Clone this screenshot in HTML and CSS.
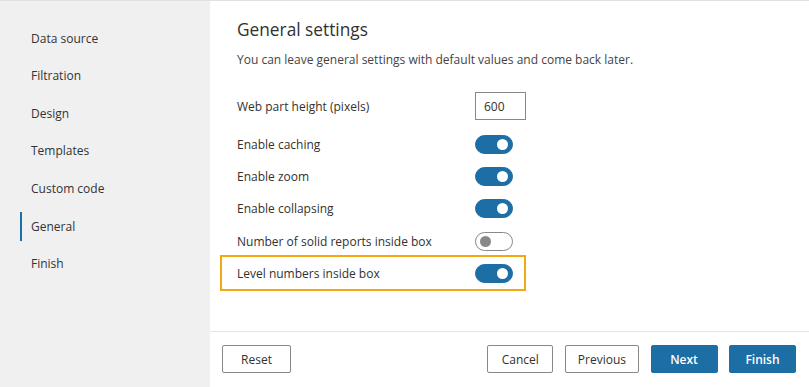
FILE: index.html
```html
<!DOCTYPE html>
<html lang="en">
<head>
    <meta charset="UTF-8">
    <meta name="viewport" content="width=device-width, initial-scale=1.0">
    <title>Wizard - General settings</title>
    <link rel="stylesheet" href="styles.css">
</head>
<body>
    <div class="wizard">
        <!-- Steps -->
        <nav class="steps">
            <div class="step">Data source</div>
            <div class="step">Filtration</div>
            <div class="step">Design</div>
            <div class="step">Templates</div>
            <div class="step">Custom code</div>
            <div class="step active">General</div>
            <div class="step">Finish</div>
        </nav>

        <!-- Page -->
        <div class="page">
            <div class="content">
                <h2>General settings</h2>
                <p class="desc">You can leave general settings with default values and come back later.</p>

                <div class="form">
                    <div class="row first">
                        <label for="height">Web part height (pixels)</label>
                        <input type="text" id="height" value="600">
                    </div>
                    <div class="row">
                        <label>Enable caching</label>
                        <span class="toggle on"><span class="knob"></span></span>
                    </div>
                    <div class="row">
                        <label>Enable zoom</label>
                        <span class="toggle on"><span class="knob"></span></span>
                    </div>
                    <div class="row">
                        <label>Enable collapsing</label>
                        <span class="toggle on"><span class="knob"></span></span>
                    </div>
                    <div class="row">
                        <label>Number of solid reports inside box</label>
                        <span class="toggle"><span class="knob"></span></span>
                    </div>
                    <div class="row highlight">
                        <label>Level numbers inside box</label>
                        <span class="toggle on"><span class="knob"></span></span>
                    </div>
                </div>
            </div>

            <!-- Footer -->
            <div class="footer">
                <button class="btn reset">Reset</button>
                <div class="spacer"></div>
                <button class="btn">Cancel</button>
                <button class="btn">Previous</button>
                <button class="btn primary">Next</button>
                <button class="btn primary">Finish</button>
            </div>
        </div>
    </div>
</body>
</html>
```

FILE: styles.css
```css
/* Global */
body {
    margin: 0;
    font-family: "Open Sans", "Noto Sans", sans-serif;
    font-size: 12px;
    color: #323130;
    background-color: #fff;
}
.wizard {
    display: flex;
    height: 387px;
    box-sizing: border-box;
    border-top: 1px solid #e1e1e1;
}

/* Steps */
.steps {
    width: 210px;
    flex-shrink: 0;
    background-color: #f0f0f0;
    padding: 22.5px 0 0 20px;
    box-sizing: border-box;
    display: flex;
    flex-direction: column;
    gap: 8.67px;
}
.step {
    height: 29px;
    line-height: 29px;
    padding-left: 11px;
    color: #333;
    cursor: pointer;
}
.step.active {
    border-left: 2px solid #1c6ea4;
    padding-left: 9px;
}

/* Page */
.page {
    flex: 1;
    display: flex;
    flex-direction: column;
}
.content {
    flex: 1;
    padding: 16px 0 0 27px;
}
h2 {
    margin: 0;
    font-size: 17.3px;
    line-height: 26px;
    font-weight: 400;
    color: #323130;
}
.desc {
    margin: 8px 0 0;
    line-height: 18px;
    color: #444;
}
.form {
    margin-top: 21px;
}
.row {
    display: flex;
    align-items: center;
    height: 32.25px;
}
.row.first {
    height: 32px;
    margin-bottom: 6.25px;
}
.row label {
    width: 238px;
    flex-shrink: 0;
}
.row.highlight {
    box-sizing: border-box;
    height: 36px;
    width: 306px;
    margin: -2px 0 -2px -17px;
    padding-left: 15px;
    border: 2px solid #f4a80f;
}
input {
    width: 51px;
    height: 28px;
    box-sizing: border-box;
    border: 1px solid #8a8886;
    padding: 0 8px;
    font: inherit;
    color: #323130;
}

/* Toggle */
.toggle {
    width: 38px;
    height: 19px;
    box-sizing: border-box;
    border-radius: 10px;
    border: 1px solid #8a8886;
    display: flex;
    align-items: center;
    padding: 0 4px;
}
.toggle .knob {
    width: 11px;
    height: 11px;
    border-radius: 50%;
    background-color: #8a8886;
}
.toggle.on {
    background-color: #1c6ea4;
    border-color: #1c6ea4;
    justify-content: flex-end;
}
.toggle.on .knob {
    background-color: #fff;
}

/* Footer */
.footer {
    display: flex;
    align-items: center;
    gap: 11.5px;
    border-top: 1px solid #e6e6e6;
    padding: 13px 13px 14px 12px;
}
.spacer {
    flex: 1;
}
.btn {
    height: 28px;
    min-width: 66px;
    padding: 0 12px;
    font: inherit;
    color: #323130;
    background-color: #fff;
    border: 1px solid #8a8886;
    border-radius: 2px;
}
.btn.reset {
    min-width: 69px;
}
.btn.primary {
    min-width: 67px;
    background-color: #1c6ea4;
    border-color: #1c6ea4;
    color: #fff;
    font-weight: 600;
}
```
